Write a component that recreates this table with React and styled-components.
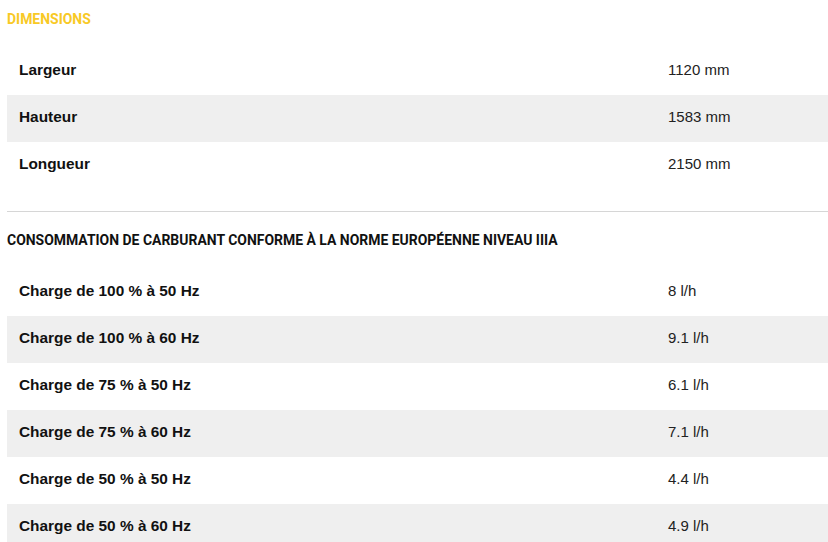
import React from "react";
import styled, { createGlobalStyle } from "styled-components";

const GlobalStyle = createGlobalStyle`
  body {
    margin: 0;
    background: #fff;
    font-family: "Liberation Sans", Arial, sans-serif;
  }
`;

const specs = [
  {
    title: "DIMENSIONS",
    accent: true,
    rows: [
      ["Largeur", "1120 mm"],
      ["Hauteur", "1583 mm"],
      ["Longueur", "2150 mm"],
    ],
  },
  {
    title: "CONSOMMATION DE CARBURANT CONFORME À LA NORME EUROPÉENNE NIVEAU IIIA",
    rows: [
      ["Charge de 100 % à 50 Hz", "8 l/h"],
      ["Charge de 100 % à 60 Hz", "9.1 l/h"],
      ["Charge de 75 % à 50 Hz", "6.1 l/h"],
      ["Charge de 75 % à 60 Hz", "7.1 l/h"],
      ["Charge de 50 % à 50 Hz", "4.4 l/h"],
      ["Charge de 50 % à 60 Hz", "4.9 l/h"],
    ],
  },
];

const Page = styled.div`
  padding: 11px 0 0 7px;
`;

const Section = styled.section`
  & + & {
    margin-top: 22px;
    padding-top: 20px;
    border-top: 1px solid #d6d6d6;
  }
`;

const Heading = styled.h3`
  margin: 0;
  width: max-content;
  transform: scaleX(0.93);
  transform-origin: left center;
  white-space: nowrap;
  font-family: Roboto, "Liberation Sans", sans-serif;
  font-weight: bold;
  font-size: 15px;
  line-height: 16px;
  color: ${(props) => (props.$accent ? "#f8c925" : "#111")};
`;

const Table = styled.div`
  margin-top: 21px;
`;

const Row = styled.div`
  display: grid;
  grid-template-columns: 1fr 172px;
  height: 47px;
  align-items: center;
  padding-bottom: 4px;
  box-sizing: border-box;
  background: ${(props) => (props.$shaded ? "#efefef" : "#fff")};
`;

const Label = styled.div`
  padding-left: 12px;
  font-size: 15.4px;
  font-weight: bold;
  color: #111;
`;

const Value = styled.div`
  padding-left: 12px;
  font-size: 15px;
  color: #222;
`;

export default function App() {
  return (
    <Page>
      <GlobalStyle />
      {specs.map((s) => (
        <Section key={s.title}>
          <Heading $accent={s.accent}>{s.title}</Heading>
          <Table>
            {s.rows.map((r, i) => (
              <Row key={r[0]} $shaded={i % 2 === 1}>
                <Label>{r[0]}</Label>
                <Value>{r[1]}</Value>
              </Row>
            ))}
          </Table>
        </Section>
      ))}
    </Page>
  );
}
